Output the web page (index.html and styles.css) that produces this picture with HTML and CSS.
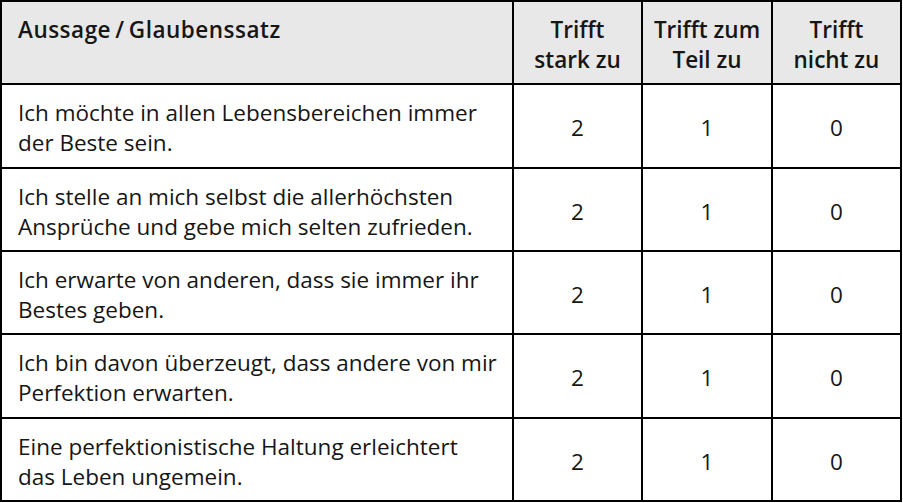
FILE: index.html
```html
<!DOCTYPE html>
<html lang="de">
<head>
<meta charset="utf-8">
<link rel="stylesheet" href="styles.css">
</head>
<body>
<div class="table">
  <div class="cell head text wide">Aussage&thinsp;/&thinsp;Glaubenssatz</div>
  <div class="cell head num">Trifft<br>stark zu</div>
  <div class="cell head num">Trifft zum<br>Teil zu</div>
  <div class="cell head num">Trifft<br>nicht zu</div>

  <div class="cell text">Ich möchte in allen Lebensbereichen immer<br>der Beste sein.</div>
  <div class="cell num">2</div><div class="cell num">1</div><div class="cell num">0</div>

  <div class="cell text">Ich stelle an mich selbst die allerhöchsten<br>Ansprüche und gebe mich selten zufrieden.</div>
  <div class="cell num">2</div><div class="cell num">1</div><div class="cell num">0</div>

  <div class="cell text">Ich erwarte von anderen, dass sie immer ihr<br>Bestes geben.</div>
  <div class="cell num">2</div><div class="cell num">1</div><div class="cell num">0</div>

  <div class="cell text">Ich bin davon überzeugt, dass andere von mir<br>Perfektion erwarten.</div>
  <div class="cell num">2</div><div class="cell num">1</div><div class="cell num">0</div>

  <div class="cell text">Eine perfektionistische Haltung erleichtert<br>das Leben ungemein.</div>
  <div class="cell num">2</div><div class="cell num">1</div><div class="cell num">0</div>
</div>
</body>
</html>
```
FILE: styles.css
```css
html, body {
  margin: 0;
  padding: 0;
  background: #ffffff;
}
.table {
  display: grid;
  width: 902px;
  grid-template-columns: 510px 127px 128px 127px;
  grid-template-rows: 81px 82px 81px 81px 82px 81px;
  gap: 2px;
  background: #000000;
  border: 2px solid #000000;
  box-sizing: border-box;
  height: 502px;
  font-family: "Open Sans", "Noto Sans", sans-serif;
  font-size: 22.5px;
  line-height: 30px;
  color: #161616;
}
.cell {
  background: #ffffff;
  display: flex;
  align-items: center;
  padding-top: 4px;
}
.cell.text {
  padding-left: 16px;
  padding-right: 8px;
  white-space: nowrap;
}
.cell.num {
  justify-content: center;
  text-align: center;
}
.cell.head {
  background: #e8e8e8;
  align-items: flex-start;
  padding-top: 13px;
  font-weight: 600;
}
.cell.wide {
  letter-spacing: 0.5px;
}
```
